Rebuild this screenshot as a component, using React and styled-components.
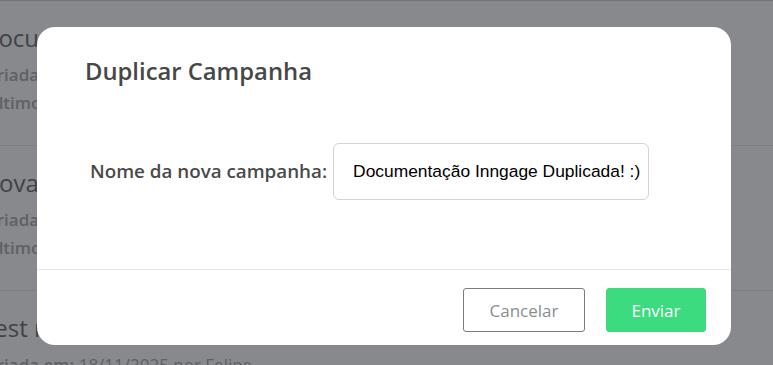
import styled, { createGlobalStyle } from "styled-components";

const GlobalStyle = createGlobalStyle`
    html, body {
        margin: 0;
        padding: 0;
        background: #ffffff;
        font-family: "Open Sans", "Noto Sans", sans-serif;
    }
    #root {
        position: relative;
        width: 773px;
        height: 365px;
        overflow: hidden;
    }
`;

const CampaignList = styled.div`
    border-top: 1px solid #d4d4d4;
    margin-left: -14px;
`;

const CampaignRow = styled.div`
    padding: 21px 0 28px;
    border-bottom: 1px solid #ebebeb;
`;

const CampaignTitle = styled.div`
    font-size: 24px;
    line-height: 32px;
    color: #6f7275;
    margin: 0 0 7px -5px;
    white-space: nowrap;
`;

const CampaignMeta = styled.div`
    font-size: 17px;
    line-height: 28px;
    color: #adadad;
    white-space: nowrap;

    b {
        font-weight: 600;
    }
`;

const Overlay = styled.div`
    position: absolute;
    inset: 0;
    background: rgba(15, 20, 25, 0.5);
`;

const Modal = styled.div`
    position: absolute;
    left: 37px;
    top: 27px;
    width: 694px;
    height: 318px;
    box-sizing: border-box;
    background: #ffffff;
    border-radius: 18px;
    display: flex;
    flex-direction: column;
`;

const ModalHeader = styled.div`
    padding: 28px 48px 0;
`;

const ModalTitle = styled.h2`
    margin: 0;
    font-size: 23.8px;
    line-height: 32px;
    font-weight: 600;
    color: #474747;
`;

const ModalBody = styled.div`
    flex: 1;
    display: flex;
    align-items: center;
    padding: 0 53px 14px;
    gap: 6px;
`;

const FieldLabel = styled.label`
    font-size: 18.8px;
    font-weight: 600;
    color: #4a4a4a;
`;

const TextInput = styled.input`
    width: 316px;
    height: 57px;
    box-sizing: border-box;
    border: 1px solid #d3d3d3;
    border-radius: 6px;
    padding: 0 0 0 19px;
    font-family: "Liberation Sans", Arial, sans-serif;
    font-size: 17.4px;
    color: #000000;
    outline: none;
`;

const ModalFooter = styled.div`
    display: flex;
    justify-content: flex-end;
    gap: 21px;
    border-top: 1px solid #e8e8e8;
    padding: 18px 25px 13px;
`;

const Button = styled.button`
    height: 44px;
    width: ${({ $width }) => $width}px;
    box-sizing: border-box;
    border-radius: 3px;
    font-family: "Open Sans", "Noto Sans", sans-serif;
    font-size: 17px;
    cursor: pointer;
    border: 1px solid ${({ $primary }) => ($primary ? "#3ddb7f" : "#7b7b7b")};
    background: ${({ $primary }) => ($primary ? "#3ddb7f" : "#ffffff")};
    color: ${({ $primary }) => ($primary ? "#ffffff" : "#8a8d90")};
`;

const campaigns = [
    { title: "Documentação Inngage", created: "18/11/2025 por Felipe", last: "18/11/2025" },
    { title: "Nova campanha", created: "18/11/2025 por Felipe", last: "18/11/2025" },
    { title: "Test newsletter", created: "18/11/2025 por Felipe", last: "18/11/2025" },
];

const App = () => {
    return (
        <>
            <GlobalStyle />
            <CampaignList>
                {campaigns.map((c) => (
                    <CampaignRow key={c.title}>
                        <CampaignTitle>{c.title}</CampaignTitle>
                        <CampaignMeta>
                            <b>Criada em:</b> {c.created}
                        </CampaignMeta>
                        <CampaignMeta>
                            <b>Último envio:</b> {c.last}
                        </CampaignMeta>
                    </CampaignRow>
                ))}
            </CampaignList>
            <Overlay />
            <Modal>
                <ModalHeader>
                    <ModalTitle>Duplicar Campanha</ModalTitle>
                </ModalHeader>
                <ModalBody>
                    <FieldLabel htmlFor="nome">Nome da nova campanha:</FieldLabel>
                    <TextInput id="nome" defaultValue="Documentação Inngage Duplicada! :)" />
                </ModalBody>
                <ModalFooter>
                    <Button $width={122}>Cancelar</Button>
                    <Button $width={100} $primary>
                        Enviar
                    </Button>
                </ModalFooter>
            </Modal>
        </>
    );
};

export default App;
